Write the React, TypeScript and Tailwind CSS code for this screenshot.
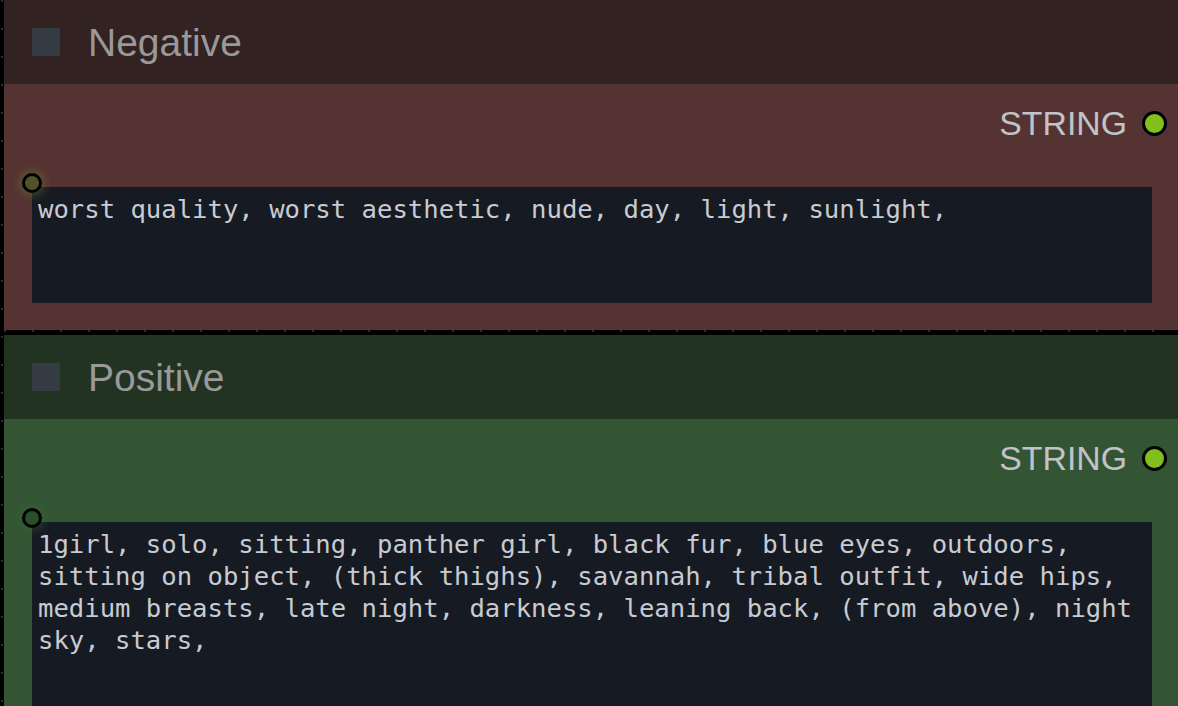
import React from "react";

type NodeProps = {
    title: string;
    titleBg: string;
    bodyBg: string;
    slotClass: string;
    text: string;
    boxHeight: string;
    bodyHeight: string;
};

const PromptNode: React.FC<NodeProps> = ({
    title,
    titleBg,
    bodyBg,
    slotClass,
    text,
    boxHeight,
    bodyHeight,
}) => {
    return (
        <div className="flex flex-col w-full shrink-0">
            {/* Title bar with the collapse box */}
            <div className={`h-[84px] flex items-center pl-[28px] ${titleBg}`}>
                <div className="w-[28px] h-[28px] bg-[#353b43]" />
                <span className="ml-[28px] mt-[1px] text-[39px] leading-none text-[#999999] font-['Liberation_Sans',Arial,sans-serif]">
                    {title}
                </span>
            </div>

            <div className={`relative flex flex-col overflow-hidden ${bodyHeight} ${bodyBg}`}>
                {/* Output slot */}
                <div className="flex items-center justify-end h-[26px] mt-[26px] pr-[11px]">
                    <span className="mt-[2px] text-[33.8px] leading-none text-[#c2c3c8] font-['Liberation_Sans',Arial,sans-serif]">
                        STRING
                    </span>
                    <div className="ml-[15px] w-[25px] h-[25px] rounded-full border-[3px] border-black bg-[#80bf1e]" />
                </div>

                {/* Input slot sits over the top corner of the text box */}
                <div
                    className={`absolute left-[18px] top-[89px] w-[20px] h-[20px] rounded-full border-[3px] border-black ${slotClass}`}
                />

                <div
                    className={`ml-[28px] mr-[26px] mt-[51px] shrink-0 bg-[#161b23] px-[6px] py-[6px] text-[25.6px] leading-[32px] text-[#c8cbd1] whitespace-pre-wrap font-['DejaVu_Sans_Mono',monospace] ${boxHeight}`}
                >
                    {text}
                </div>
            </div>
        </div>
    );
};

export default function App() {
    return (
        <div className="w-[1178px] h-[706px] bg-black flex overflow-hidden">
            {/* canvas grid marks along the left edge */}
            <div className="w-[4px] h-full shrink-0 pl-[1px]">
                <div className="w-[2px] h-full bg-[repeating-linear-gradient(to_bottom,#2c2c2c_0px,#2c2c2c_2px,transparent_2px,transparent_28px)]" />
            </div>

            <div className="flex-1 flex flex-col">
                <PromptNode
                    title="Negative"
                    titleBg="bg-[#322222]"
                    bodyBg="bg-[#553333]"
                    slotClass="bg-[#52522a] shadow-[0_0_7px_4px_rgba(110,130,40,0.35)]"
                    text="worst quality, worst aesthetic, nude, day, light, sunlight,"
                    boxHeight="h-[116px]"
                    bodyHeight="h-[246px]"
                />

                <div className="h-[5px] shrink-0 bg-black">
                    <div className="h-[2px] w-full bg-[repeating-linear-gradient(to_right,#2c2c2c_0px,#2c2c2c_2px,transparent_2px,transparent_28px)]" />
                </div>

                <PromptNode
                    title="Positive"
                    titleBg="bg-[#223322]"
                    bodyBg="bg-[#335533]"
                    slotClass="bg-[#2b4f2b] shadow-[0_0_7px_4px_rgba(60,110,60,0.3)]"
                    text="1girl, solo, sitting, panther girl, black fur, blue eyes, outdoors, sitting on object, (thick thighs), savannah, tribal outfit, wide hips, medium breasts, late night, darkness, leaning back, (from above), night sky, stars,"
                    boxHeight="h-[220px]"
                    bodyHeight="h-[300px]"
                />
            </div>
        </div>
    );
}
